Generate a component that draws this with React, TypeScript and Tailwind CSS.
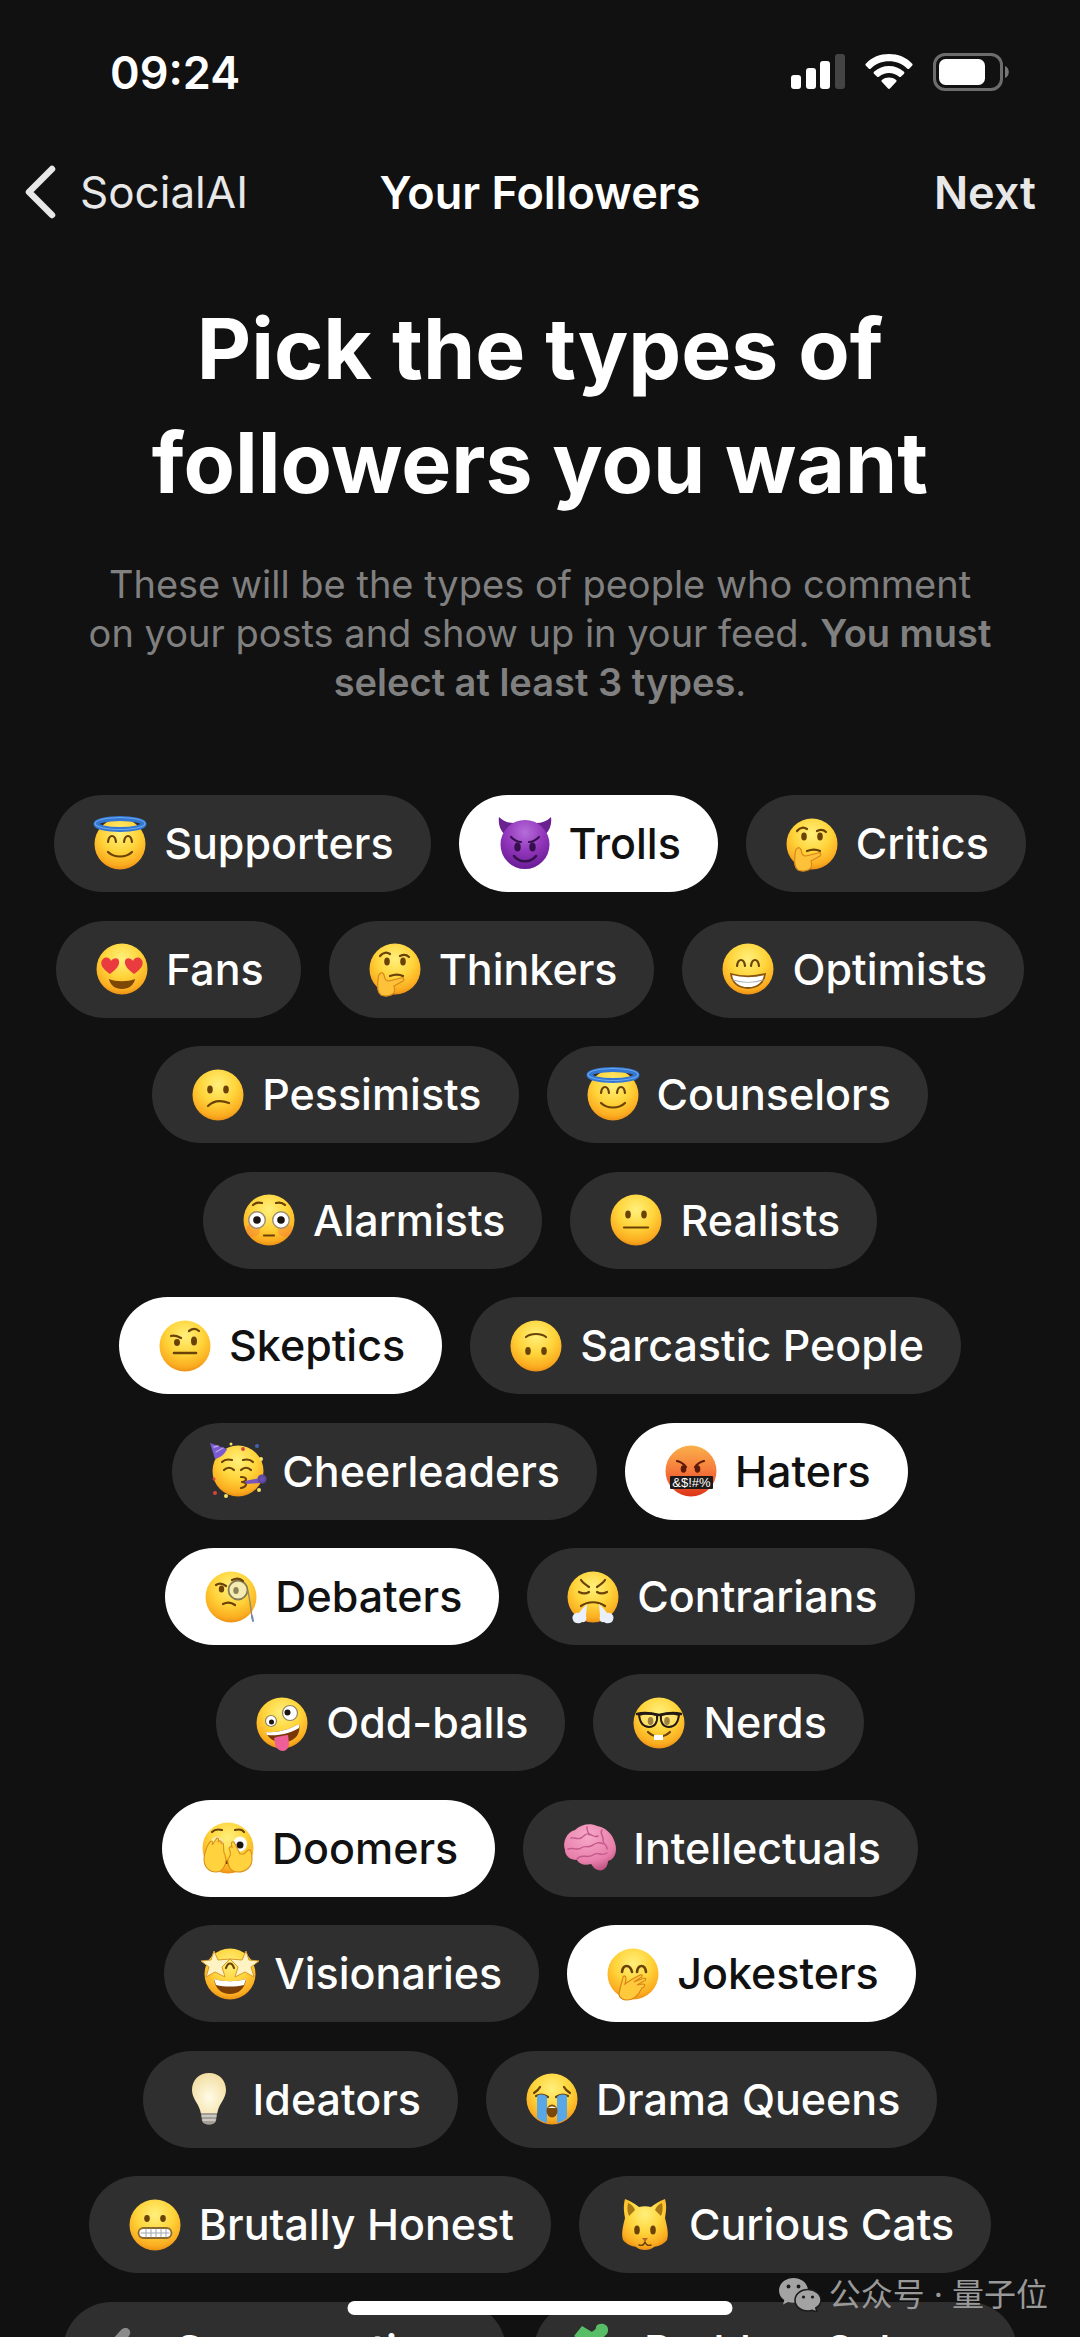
import { useState, type ReactNode } from 'react'
import clsx from 'clsx'

const ink = '#6a4207'

// Gradients shared by every emoji drawing
function EmojiDefs() {
  return (
    <svg width="0" height="0" className="absolute" aria-hidden="true">
      <defs>
        <radialGradient id="face" cx="50%" cy="30%" r="72%">
          <stop offset="0" stopColor="#fff07c" />
          <stop offset="0.5" stopColor="#ffd43a" />
          <stop offset="0.85" stopColor="#fbac20" />
          <stop offset="1" stopColor="#e88a12" />
        </radialGradient>
        <radialGradient id="purple" cx="50%" cy="25%" r="75%">
          <stop offset="0" stopColor="#b56dd8" />
          <stop offset="0.5" stopColor="#9438bd" />
          <stop offset="1" stopColor="#6a1b96" />
        </radialGradient>
        <linearGradient id="rage" x1="0" y1="0" x2="0" y2="1">
          <stop offset="0" stopColor="#fbb04b" />
          <stop offset="0.5" stopColor="#f5793b" />
          <stop offset="1" stopColor="#dd3417" />
        </linearGradient>
        <radialGradient id="bulb" cx="50%" cy="60%" r="60%">
          <stop offset="0" stopColor="#fffbe6" />
          <stop offset="1" stopColor="#f3dfa4" />
        </radialGradient>
        <radialGradient id="brain" cx="45%" cy="25%" r="80%">
          <stop offset="0" stopColor="#f7a9c8" />
          <stop offset="0.7" stopColor="#e87fab" />
          <stop offset="1" stopColor="#bb4f80" />
        </radialGradient>
      </defs>
    </svg>
  )
}

function Face({ fill = 'url(#face)' }: { fill?: string }) {
  return <circle cx="26" cy="26" r="25.5" fill={fill} />
}

function Line({ d, color = ink, width = 2.2 }: { d: string; color?: string; width?: number }) {
  return <path d={d} fill="none" stroke={color} strokeWidth={width} strokeLinecap="round" strokeLinejoin="round" />
}

function Eyes({ y = 20, x1 = 18, x2 = 34, rx = 2.8, ry = 3.9 }) {
  return (
    <g fill={ink}>
      <ellipse cx={x1} cy={y} rx={rx} ry={ry} />
      <ellipse cx={x2} cy={y} rx={rx} ry={ry} />
    </g>
  )
}

const emojis: Record<string, ReactNode> = {
  angel: (
    <>
      <Face />
      <ellipse cx="26" cy="6" rx="24" ry="5.5" fill="none" stroke="#3578d4" strokeWidth="5" />
      <ellipse cx="26" cy="5.5" rx="25" ry="6" fill="none" stroke="#69a8ee" strokeWidth="1.2" />
      <Line d="M14 24c1-8 7-8 8 0M30 24c1-8 7-8 8 0" />
      <Line d="M14 34c6 6 18 6 24 0" />
    </>
  ),
  devil: (
    <>
      <path d="M6 17C1 12-1 6 0-1c4 4 9 6 15 6zM46 17c5-5 7-11 6-18-4 4-9 6-15 6z" fill="#6b2291" />
      <circle cx="26" cy="26.5" r="24.5" fill="url(#purple)" />
      <Line d="M12 19c3 3 7 5 10 5M40 19c-3 3-7 5-10 5" color="#35104d" />
      <ellipse cx="18.5" cy="29" rx="3.2" ry="4.5" fill="#35104d" />
      <ellipse cx="33.5" cy="29" rx="3.2" ry="4.5" fill="#35104d" />
      <Line d="M15 38c5 7 17 7 22 0" color="#35104d" width={2.6} />
    </>
  ),
  thinking: (
    <>
      <Face />
      <Line d="M11 13c3-4 7-4 10-2M31 13c4-2 7-1 9 1" />
      <Eyes y={18.5} />
      <Line d="M21 33c5-2 9-2 13 0" />
      <path
        d="M9 37c-1 7-1 12 3 15 4 2 10 1 13-2 1-3 1-5 0-7l9-5c2-2 0-4-2-3l-12 3c-3 0-4-1-5-6-1-4-6-3-6 5z"
        fill="#fdc23a"
        stroke="#d9861a"
        strokeWidth="1.2"
      />
    </>
  ),
  hearts: (
    <>
      <Face />
      <g fill="#ea3b3f">
        <path d="M14 31C6 26 3 20 7 16c3-3 7-1 8 2 2-3 7-4 8 0 1 5-4 9-9 13z" />
        <path d="M38 31c8-5 11-11 7-15-3-3-7-1-8 2-2-3-7-4-8 0-1 5 4 9 9 13z" />
      </g>
      <path d="M13 36c7 3 19 3 26 0-1 6-6 10-13 10s-12-4-13-10z" fill="#7d4708" />
    </>
  ),
  grin: (
    <>
      <Face />
      <Line d="M15 23c1-8 7-8 8 0M29 23c1-8 7-8 8 0" />
      <path d="M9 31c11 3 23 3 34 0-1 9-8 14-17 14S10 40 9 31z" fill="#fff" stroke="#8a5510" strokeWidth="1.8" />
      <Line d="M11 37c9 3 21 3 30 0" color="#a9adb1" width={1.2} />
    </>
  ),
  confused: (
    <>
      <Face />
      <Eyes y={20.5} />
      <Line d="M16 37c5-5 13-6 21-3" />
    </>
  ),
  flushed: (
    <>
      <Face />
      <g fill="#f4753c" opacity="0.35">
        <circle cx="10" cy="36" r="7" />
        <circle cx="42" cy="36" r="7" />
      </g>
      <circle cx="14" cy="26" r="8.3" fill="#fff" stroke="#9b8b70" strokeWidth="1.4" />
      <circle cx="38" cy="26" r="8.3" fill="#fff" stroke="#9b8b70" strokeWidth="1.4" />
      <circle cx="14" cy="26" r="3.8" fill="#1c1410" />
      <circle cx="38" cy="26" r="3.8" fill="#1c1410" />
      <Line d="M10 11c2-2 5-3 9-2M42 11c-2-2-5-3-9-2M21 41.500h10" />
    </>
  ),
  neutral: (
    <>
      <Face />
      <Eyes y={20.5} />
      <Line d="M14 33.500h24" />
    </>
  ),
  eyebrow: (
    <>
      <Face />
      <Line d="M12 16c3-1 6 0 10 2M30 11c4-3 7-3 10 0" />
      <ellipse cx="18" cy="22.500" rx="3" ry="3.4" fill={ink} />
      <ellipse cx="35" cy="21" rx="3" ry="4.600" fill={ink} />
      <Line d="M15 33h22" width={2.6} />
    </>
  ),
  upsideDown: (
    <>
      <Face />
      <Line d="M16 17c5-4 15-4 20 0" />
      <Eyes y={31} />
    </>
  ),
  party: (
    <>
      <Face />
      <path d="M-2-2l17 6c-1 4-7 9-12 10z" fill="#7a5bd0" />
      <Line d="M2 2l4-1M4 7l7-4" color="#b9a4f0" width={1.4} />
      <Line d="M10 17c3-3 6-3 10-2M31 15c4-1 7-1 10 2" />
      <Line d="M12 25c3-3 7-3 10 0M29 25c3-3 7-3 10 0" />
      <Line d="M29 32c7 0 6 5 1 5 6 0 5 5-1 6" />
      <path d="M33 36l15-3v5l-14 1z" fill="#7a56b8" />
      <circle cx="50" cy="34" r="3.500" fill="#6a4fae" stroke="#5d479f" strokeWidth="2" />
      <g fill="#d9433f">
        <circle cx="31" cy="4" r="1.900" />
        <circle cx="3" cy="48" r="2" />
        <circle cx="2" cy="34" r="1.500" />
      </g>
      <g fill="#f8e06a">
        <circle cx="49" cy="14" r="2" />
        <circle cx="14" cy="51" r="2" />
        <circle cx="47" cy="45" r="2" />
        <circle cx="19" cy="-1" r="1.500" />
      </g>
      <circle cx="45" cy="1" r="2" fill="#3f63b5" />
    </>
  ),
  cursing: (
    <>
      <Face fill="url(#rage)" />
      <Line d="M12 16c4 1 7 3 9 6M39 16c-4 1-7 3-9 6" color="#5c1b07" />
      <ellipse cx="18.500" cy="24" rx="2.800" ry="3.800" fill="#5c1b07" />
      <ellipse cx="32.500" cy="24" rx="2.800" ry="3.800" fill="#5c1b07" />
      <rect x="5" y="31" width="43" height="13" rx="1" fill="#1f1a19" />
      <text x="26.500" y="42" textAnchor="middle" fontSize="13" fontFamily="Liberation Sans, sans-serif" fill="#fff">
        &amp;$!#%
      </text>
    </>
  ),
  monocle: (
    <>
      <Face />
      <Line d="M11 14c3-2 6-2 10 1" />
      <ellipse cx="16.500" cy="18" rx="2.700" ry="3.600" fill={ink} />
      <circle cx="33" cy="19" r="9.500" fill="#f4ecb0" stroke="#857a58" strokeWidth="1.800" />
      <ellipse cx="31" cy="19.500" rx="2.700" ry="3.600" fill="#8d8358" />
      <Line d="M27 9c4-2 8-2 11 1" />
      <Line d="M18 33c4-2 8-2 12 1" />
      <Line d="M43 20c2 9 3 18 4 27" color="#9b8b60" width={1.400} />
      <Line d="M47 45l1 5" color="#6e8bb6" width={2} />
    </>
  ),
  huffing: (
    <>
      <Face />
      <Line d="M14 9c2 3 5 5 8 7M38 9c-2 3-5 5-8 7M12 21c4 2 7 2 10 0M30 21c3 2 6 2 10 0" />
      <Line d="M14 35c7-5 17-5 24 0" />
      <path d="M20 33c-3 3-6 6-8 9-4-1-8 3-6 7 1 4 7 4 9 2 4 1 5-3 4-6z" fill="#e9f0fb" />
      <path d="M32 33c3 3 6 6 8 9 4-1 8 3 6 7-1 4-7 4-9 2-4 1-5-3-4-6z" fill="#e9f0fb" />
    </>
  ),
  zany: (
    <>
      <Face />
      <circle cx="15" cy="24" r="5.500" fill="#fff" stroke="#8f8263" strokeWidth="1.200" />
      <circle cx="34" cy="16" r="7.500" fill="#fff" stroke="#8f8263" strokeWidth="1.200" />
      <circle cx="15.500" cy="25" r="2.500" fill="#1c1410" />
      <circle cx="31.500" cy="15.500" r="3" fill="#1c1410" />
      <path d="M10 35c11 1 22-2 33-8 2 9-3 16-12 18-9 1-18-1-21-10z" fill="#7b3607" />
      <path d="M10 35c11 1 22-2 33-8l0 4c-10 6-21 8-32 7z" fill="#fff" />
      <path d="M18 41c4-2 9-2 14-3l1 8c0 5-3 8-6 8-4 0-7-3-8-7z" fill="#ee5f98" />
    </>
  ),
  nerd: (
    <>
      <Face />
      <Eyes y={24} x1={17.5} x2={34} />
      <g fill="#fff3a8" fillOpacity="0.35" stroke="#231a14" strokeWidth="2">
        <path d="M6 18c6-2 12-2 18 0 1 7-2 12-8 12S7 26 6 18zM46 18c-6-2-12-2-18 0-1 7 2 12 8 12s9-4 10-12z" />
      </g>
      <Line d="M4 17c8-2 14-1 22 1 8-2 14-3 22-1" color="#231a14" width={2.600} />
      <Line d="M15 35c6 6 16 6 22 0" />
      <path d="M21 38h9v5h-9z" fill="#fff" />
    </>
  ),
  peeking: (
    <>
      <Face />
      <Line d="M10 10c3-3 6-3 10-2M33 8c4-1 7-1 9 2" />
      <ellipse cx="15" cy="22" rx="7" ry="7.500" fill="#f7e9a0" />
      <ellipse cx="38" cy="22" rx="7" ry="7.500" fill="#fff" />
      <circle cx="38" cy="23" r="3.500" fill="#1c1410" />
      <path d="M21 42c2-5 8-5 10 0z" fill="#7b3607" />
      <g fill="#ffd23e" stroke="#d9901b" strokeWidth="1.100">
        <path d="M2 37c0-6 4-16 7-18 2 0 2 2 1 4l5-7c2 0 2 2 1 4 2-2 4-1 3 1l2 0c2 5-1 8 2 12l1 5c0 6-4 12-10 12S2 46 2 37z" />
        <path d="M50 37c0-6-1-10-4-9l-4 4-4 0-6-12c-3-1-3 2-2 5-2-1-4 1-2 4 1 4 0 5-2 8-1 6 2 13 10 13s14-5 14-13z" />
      </g>
    </>
  ),
  brain: (
    <>
      <path
        d="M2 28C-1 20 4 10 12 8c6-6 16-7 22-4 9 1 16 9 18 17 3 9-1 17-7 18 0 6-5 11-10 9-4-1-5-4-7-6-6 2-12 0-14-4C7 38 2 34 2 28z"
        fill="url(#brain)"
      />
      <Line
        d="M8 16c4-1 6 2 10 0s4-5 8-4 5 4 9 2M5 27c6-2 9 2 13-1s6 0 10-2 7-5 12-2M14 37c4-6 10 0 16-4s8 2 14-2M24 5c-1 4 2 5 2 8M39 8c-3 3 2 6 1 10s5 5 4 9"
        color="#c3588a"
        width={1.400}
      />
    </>
  ),
  starStruck: (
    <>
      <Face />
      <Line d="M22 20c2-6 6-6 8 0" />
      <g fill="#fff3c4" stroke="#d79a2a" strokeWidth="1">
        <path d="M10 3l4 9 12-1-8 8 3 10-10-5-9 5 3-10-8-6 10-1z" />
        <path d="M42 3l-4 9-12-1 8 8-3 10 10-5 9 5-3-10 8-6-10-1z" />
      </g>
      <path d="M10 31c10 3 22 3 32 0-1 10-8 15-16 15s-15-5-16-15z" fill="#7d3f08" />
      <path d="M10 31c10 3 22 3 32 0l-2 6c-9 2-19 2-28 0z" fill="#fff" />
    </>
  ),
  giggle: (
    <>
      <Face />
      <Line d="M15 24c1-8 8-8 10 0M30 24c1-8 8-8 9 0" width={2.600} />
      <path
        d="M12 46c1-7 3-12 4-17 1-2 3-1 3 2l-1 5c5-4 9-6 15-9 3-1 3 2 0 3l-6 4 10-4c3 0 2 3 0 3l-7 4 6-1c3 0 2 3-1 4-3 6-8 12-15 12-4 0-8-2-8-6z"
        fill="#ffc93c"
        stroke="#d9861a"
        strokeWidth="1.200"
      />
    </>
  ),
  bulb: (
    <>
      <path d="M26 0c-10 0-17 7-17 17 0 8 6 13 8 20l1 4h16l1-4c2-7 8-12 8-20 0-10-7-17-17-17z" fill="url(#bulb)" />
      <path d="M18 40h16l-1 8c-2 5-12 5-14 0z" fill="#a39f96" />
      <Line d="M19 43h14M20 47h12" color="#d9d6cf" width={1.400} />
    </>
  ),
  sob: (
    <>
      <Face />
      <Line d="M8 20c3-2 5-4 6-6M44 20c-3-2-5-4-6-6M10 23c4-2 8-2 12 1M30 24c4-3 8-3 12-1" />
      <path d="M11 23c3-2 7-2 10 1v26c-4-1-7-3-10-5zM31 24c3-3 7-3 10-1v22c-3 2-6 4-10 5z" fill="#5aa7e8" />
      <ellipse cx="26" cy="38" rx="5.500" ry="6.500" fill="#7d4708" />
      <path d="M22 35c2-2 6-2 8 0z" fill="#fff" />
    </>
  ),
  grimace: (
    <>
      <Face />
      <Eyes y={19.5} ry={3.4} />
      <rect x="9.500" y="29" width="33" height="10" rx="5" fill="#fff" stroke="#8a6a2c" strokeWidth="1.800" />
      <Line d="M12 34h28M17 30v8M22 30v8M27 30v8M32 30v8M37 30v8" color="#a3a9ae" width={1} />
    </>
  ),
  cat: (
    <>
      <path
        d="M6 0c6 2 10 5 14 8 4-1 8-1 12 0 4-3 8-6 14-8 2 7 1 13 0 19 2 8 4 16 2 22-4 5-9 6-13 7-4 4-14 4-18 0-4-1-9-2-13-7-2-6 0-14 2-22-1-6-2-12 0-19z"
        fill="url(#face)"
      />
      <path d="M9 4c3 1 6 4 7 7l-6 6c-2-4-2-9-1-13zM43 4c-3 1-6 4-7 7l6 6c2-4 2-9 1-13z" fill="#a87815" />
      <Eyes y={31} ry={4.6} />
      <path d="M23 39h6l-3 4z" fill="#b4662a" />
      <Line d="M20 46c3 1 5 0 6-3 1 3 3 4 6 3" width={1.400} />
    </>
  ),
  puzzle: (
    <path
      d="M0 12L8 2l10 6c2-2 4-2 4-5C23-1 33-2 34 5c1 6-5 7-6 11l8 9-9 8c-1 5 4 9-1 13-6 3-11-2-9-8L6 31l6-11z"
      fill="#58bd67"
    />
  ),
  tool: <path d="M18 6c5-5 12 0 8 6L10 34l-10-8z" fill="#8b8b8b" />,
}

type FollowerType = { label: string; emoji: string }

const rows: FollowerType[][] = [
  [
    { label: 'Supporters', emoji: 'angel' },
    { label: 'Trolls', emoji: 'devil' },
    { label: 'Critics', emoji: 'thinking' },
  ],
  [
    { label: 'Fans', emoji: 'hearts' },
    { label: 'Thinkers', emoji: 'thinking' },
    { label: 'Optimists', emoji: 'grin' },
  ],
  [
    { label: 'Pessimists', emoji: 'confused' },
    { label: 'Counselors', emoji: 'angel' },
  ],
  [
    { label: 'Alarmists', emoji: 'flushed' },
    { label: 'Realists', emoji: 'neutral' },
  ],
  [
    { label: 'Skeptics', emoji: 'eyebrow' },
    { label: 'Sarcastic People', emoji: 'upsideDown' },
  ],
  [
    { label: 'Cheerleaders', emoji: 'party' },
    { label: 'Haters', emoji: 'cursing' },
  ],
  [
    { label: 'Debaters', emoji: 'monocle' },
    { label: 'Contrarians', emoji: 'huffing' },
  ],
  [
    { label: 'Odd-balls', emoji: 'zany' },
    { label: 'Nerds', emoji: 'nerd' },
  ],
  [
    { label: 'Doomers', emoji: 'peeking' },
    { label: 'Intellectuals', emoji: 'brain' },
  ],
  [
    { label: 'Visionaries', emoji: 'starStruck' },
    { label: 'Jokesters', emoji: 'giggle' },
  ],
  [
    { label: 'Ideators', emoji: 'bulb' },
    { label: 'Drama Queens', emoji: 'sob' },
  ],
  [
    { label: 'Brutally Honest', emoji: 'grimace' },
    { label: 'Curious Cats', emoji: 'cat' },
  ],
  [
    { label: 'Conservatives', emoji: 'tool' },
    { label: 'Problem Solvers', emoji: 'puzzle' },
  ],
]

function StatusBar() {
  return (
    <div className="flex h-36 shrink-0 items-center justify-between pr-[70px] pl-[110px]">
      <span className="text-[45px] leading-none font-semibold">09:24</span>
      <div className="flex items-center gap-5">
        <svg width="54" height="36" viewBox="0 0 54 36" fill="#fff" aria-hidden="true">
          <rect x="0" y="21" width="10" height="14" rx="3" />
          <rect x="15" y="14" width="10" height="21" rx="3" />
          <rect x="29" y="7" width="10" height="28" rx="3" />
          <rect x="44" y="0" width="10" height="35" rx="3" fill="#444" />
        </svg>
        <svg width="48" height="36" viewBox="0 0 48 36" fill="#fff" aria-hidden="true">
          <path d="M24 0C15 0 7 3 1 9.500c-.8.8-.8 1.500 0 2.300l2.600 2.600c.8.8 1.500.7 2.300 0C11 9.700 17 7.300 24 7.300s13 2.400 18.100 7.100c.8.7 1.500.8 2.300 0l2.600-2.600c.8-.8.8-1.500 0-2.300C41 3 33 0 24 0z" />
          <path d="M24 12c-5.600 0-10.700 2-14.700 5.600-.9.8-.9 1.500-.1 2.300l2.700 2.600c.8.8 1.400.7 2.300 0 2.800-2.300 6-3.500 9.800-3.500s7 1.200 9.800 3.500c.9.7 1.500.8 2.300 0l2.700-2.600c.8-.8.8-1.500-.1-2.300C34.700 14 29.600 12 24 12z" />
          <path d="M24 23.500c-2.600 0-4.900.8-6.800 2.200-1 .7-1 1.500-.2 2.300l5.800 6.200c.8.9 1.600.9 2.400 0L31 28c.8-.8.8-1.600-.2-2.300-1.900-1.400-4.200-2.200-6.800-2.200z" />
        </svg>
        <svg width="77" height="38" viewBox="0 0 77 38" aria-hidden="true">
          <rect x="1.500" y="1.500" width="67" height="35" rx="10.500" fill="none" stroke="#6d6d6d" strokeWidth="3" />
          <rect x="6" y="6" width="46" height="26" rx="6.500" fill="#fff" />
          <path d="M72 13c5 1.500 5 10.500 0 12z" fill="#777" />
        </svg>
      </div>
    </div>
  )
}

function NavBar() {
  return (
    <header className="grid h-24 shrink-0 grid-cols-[1fr_auto_1fr] items-center px-6 text-[45px] leading-none">
      <button type="button" className="flex items-center gap-6 text-[44px] text-[#e8e8e8]">
        <svg width="32" height="54" viewBox="0 0 32 54" aria-hidden="true">
          <path
            d="M28 4L5 27l23 23"
            fill="none"
            stroke="currentColor"
            strokeWidth="6.500"
            strokeLinecap="round"
            strokeLinejoin="round"
          />
        </svg>
        SocialAI
      </button>
      <h1 className="font-semibold">Your Followers</h1>
      <button type="button" className="justify-self-end pr-5 font-semibold text-[#e8e8e8]">
        Next
      </button>
    </header>
  )
}

function Pill({ item, selected, onToggle }: { item: FollowerType; selected: boolean; onToggle: () => void }) {
  return (
    <button
      type="button"
      aria-pressed={selected}
      onClick={onToggle}
      className={clsx(
        'flex h-[97px] items-center gap-[18px] rounded-full pr-[37px] pl-10 text-[43px] leading-none font-medium whitespace-nowrap',
        selected ? 'bg-white text-[#111]' : 'bg-[#2f2f2f] text-white'
      )}
    >
      <svg width="52" height="52" viewBox="0 0 52 52" className="overflow-visible" aria-hidden="true">
        {emojis[item.emoji]}
      </svg>
      {item.label}
    </button>
  )
}

export default function App() {
  const [selected, setSelected] = useState(['Trolls', 'Skeptics', 'Haters', 'Debaters', 'Doomers', 'Jokesters'])

  const toggle = (label: string) =>
    setSelected((prev) => (prev.includes(label) ? prev.filter((l) => l !== label) : [...prev, label]))

  return (
    <div className="relative flex h-screen flex-col overflow-hidden bg-[#111] font-['Inter','Noto_Sans_CJK_SC',sans-serif] text-white">
      <EmojiDefs />
      <StatusBar />
      <NavBar />

      <main className="flex grow flex-col">
        <h2 className="mt-13 text-center text-[84px] leading-[114px] font-bold">
          Pick the types of
          <br />
          followers you want
        </h2>
        <p className="mt-10 text-center text-[38px] leading-[49px] text-[#808080]">
          These will be the types of people who comment
          <br />
          on your posts and show up in your feed. <strong className="font-semibold">You must</strong>
          <br />
          <strong className="font-semibold">select at least 3 types</strong>.
        </p>

        {/* Follower types, the last row runs off the bottom edge */}
        <div className="mt-22 -mb-[62px] flex grow flex-col justify-between gap-7">
          {rows.map((row) => (
            <div key={row[0].label} className="flex justify-center gap-7">
              {row.map((item) => (
                <Pill
                  key={item.label}
                  item={item}
                  selected={selected.includes(item.label)}
                  onToggle={() => toggle(item.label)}
                />
              ))}
            </div>
          ))}
        </div>
      </main>

      {/* Home indicator */}
      <div className="absolute bottom-[22px] left-1/2 h-[14px] w-[385px] -translate-x-1/2 rounded-full bg-white" />

      {/* Watermark */}
      <div className="absolute right-8 bottom-[22px] flex items-center gap-2 text-[32px] leading-10 text-[#999]">
        <svg width="42" height="34" viewBox="0 0 42 34" aria-hidden="true">
          <path
            d="M14.500 0C6.500 0 0 5.500 0 12.500c0 4 2 7.300 5.300 9.600L4 26.500l5-2.600c1.800.5 3.600.8 5.500.8 8 0 14.500-5.500 14.500-12.300S22.500 0 14.500 0z"
            fill="#a3a3a3"
          />
          <path
            d="M29 11.500c-7.300 0-13 4.700-13 10.700s5.700 10.700 13 10.700c1.500 0 3-.2 4.300-.6L38 34l-1.200-4c3.200-2 5.200-4.700 5.200-7.900 0-6-5.700-10.600-13-10.600z"
            fill="#a3a3a3"
            stroke="#1b1b1b"
            strokeWidth="1.500"
          />
          <g fill="#1b1b1b">
            <circle cx="9.500" cy="8.500" r="1.900" />
            <circle cx="19.500" cy="8.500" r="1.900" />
            <circle cx="24.500" cy="19" r="1.600" />
            <circle cx="33.500" cy="19" r="1.600" />
          </g>
        </svg>
        <span>公众号 · 量子位</span>
      </div>
    </div>
  )
}
